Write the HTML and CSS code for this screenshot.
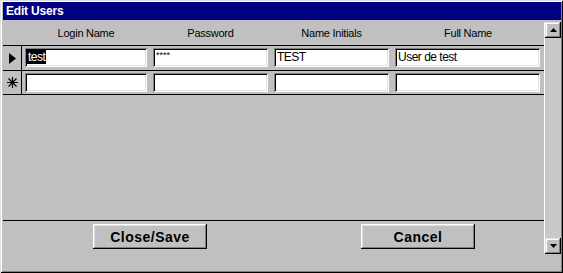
FILE: index.html
```html
<!DOCTYPE html>
<html lang="en">
<head>
  <meta charset="UTF-8">
  <title>Edit Users</title>
  <link rel="stylesheet" href="styles.css">
</head>
<body>
  <div class="window">
    <div class="titlebar">Edit Users</div>
    <div class="client">
      <div class="form">
        <div class="grid">
          <div class="row header">
            <div class="selector"></div>
            <div class="cell c-login">Login Name</div>
            <div class="cell c-pass">Password</div>
            <div class="cell c-init">Name Initials</div>
            <div class="cell c-full">Full Name</div>
          </div>

          <div class="row record current">
            <div class="selector">
              <svg width="7" height="11" viewBox="0 0 7 11"><path d="M0 0 L7 5.5 L0 11 Z" fill="#000"/></svg>
            </div>
            <div class="cell c-login"><div class="field"><span class="sel">test</span></div></div>
            <div class="cell c-pass"><div class="field pass">****</div></div>
            <div class="cell c-init"><div class="field">TEST</div></div>
            <div class="cell c-full"><div class="field">User de test</div></div>
          </div>

          <div class="row record new">
            <div class="selector">
              <svg width="11" height="11" viewBox="0 0 11 11">
                <path d="M5.5 0 V11 M0 5.5 H11 M1.5 1.5 L9.5 9.5 M9.5 1.5 L1.5 9.5" stroke="#000" stroke-width="1.2"/>
              </svg>
            </div>
            <div class="cell c-login"><div class="field"></div></div>
            <div class="cell c-pass"><div class="field"></div></div>
            <div class="cell c-init"><div class="field"></div></div>
            <div class="cell c-full"><div class="field"></div></div>
          </div>
        </div>

        <div class="footer">
          <button class="btn">Close/Save</button>
          <button class="btn">Cancel</button>
        </div>
      </div>

      <div class="vscroll">
        <div class="sb-btn">
          <svg width="7" height="4" viewBox="0 0 7 4"><path d="M3.5 0 L7 4 L0 4 Z" fill="#000"/></svg>
        </div>
        <div class="sb-track"></div>
        <div class="sb-btn">
          <svg width="7" height="4" viewBox="0 0 7 4"><path d="M0 0 L7 0 L3.5 4 Z" fill="#000"/></svg>
        </div>
      </div>
    </div>
  </div>
</body>
</html>
```

FILE: styles.css
```css
body {
  margin: 0;
  padding: 0;
  background-color: #c0c0c0;
  font-family: 'Liberation Sans', Arial, sans-serif;
}

.window {
  width: 563px;
  height: 273px;
  box-sizing: border-box;
  padding: 2px 2px 3px 3px;
  background-color: #c0c0c0;
  box-shadow: inset 1px 1px #dfdfdf, inset -1px -1px #000, inset 2px 2px #fff, inset -2px -2px #808080;
  display: flex;
  flex-direction: column;
}

.titlebar {
  height: 18px;
  line-height: 18px;
  background-color: #000080;
  color: #fff;
  font-weight: bold;
  font-size: 12px;
  letter-spacing: -0.2px;
  padding-left: 3px;
}

.client {
  flex: 1;
  display: flex;
}

.form {
  width: 541px;
  display: flex;
  flex-direction: column;
}

.grid {
  flex: 1;
  padding-top: 1px;
  border-bottom: 1px solid #000;
}

.row {
  display: flex;
  border-bottom: 1px solid #000;
}

.header {
  height: 24px;
  font-size: 11px;
  letter-spacing: -0.25px;
  color: #000;
}

.header .cell {
  display: flex;
  align-items: center;
  justify-content: center;
}

.selector {
  width: 18px;
  display: flex;
  align-items: center;
  justify-content: center;
}

.record .selector {
  border-right: 1px solid #000;
}

.header .selector {
  width: 19px;
}

.c-login { width: 128px; }
.c-pass { width: 121px; }
.c-init { width: 121px; }
.c-full { width: 152px; }

.record .cell {
  padding: 2px 3px 3px 3px;
  box-sizing: border-box;
}

.record .c-full {
  padding-right: 4px;
}

.new .cell {
  padding-bottom: 2px;
}

.field {
  height: 19px;
  box-sizing: border-box;
  padding: 2px 3px 0 3px;
  background-color: #fff;
  box-shadow: inset 1px 1px #808080, inset -1px -1px #fff, inset 2px 2px #000, inset -2px -2px #dfdfdf;
  font-size: 12px;
  letter-spacing: -0.5px;
  line-height: 15px;
  white-space: nowrap;
  overflow: hidden;
}

.field.pass {
  font-size: 9px;
  letter-spacing: 0;
  line-height: 10px;
}

.sel {
  background-color: #000;
  color: #fff;
  margin-left: -1px;
  padding: 0 1px;
}

.footer {
  height: 49px;
  box-sizing: border-box;
  display: flex;
  align-items: flex-start;
  padding: 3px 0 0 90px;
  gap: 154px;
}

.btn {
  width: 114px;
  height: 25px;
  border: none;
  background-color: #c0c0c0;
  box-shadow: inset -1px -1px #000, inset 1px 1px #fff, inset -2px -2px #808080, inset 2px 2px #dfdfdf;
  font-family: 'Liberation Sans', Arial, sans-serif;
  font-weight: bold;
  font-size: 14px;
  letter-spacing: 0.5px;
  color: #000;
  padding: 0;
}

.vscroll {
  width: 17px;
  margin-top: 2px;
  margin-bottom: 16px;
  box-sizing: border-box;
  border-left: 1px solid #fff;
  display: flex;
  flex-direction: column;
}

.sb-btn {
  height: 16px;
  background-color: #c0c0c0;
  box-shadow: inset -1px -1px #000, inset 1px 1px #dfdfdf, inset -2px -2px #808080, inset 2px 2px #fff;
  display: flex;
  align-items: center;
  justify-content: center;
}

.sb-track {
  flex: 1;
  background-color: #c8c8c8;
}
```
